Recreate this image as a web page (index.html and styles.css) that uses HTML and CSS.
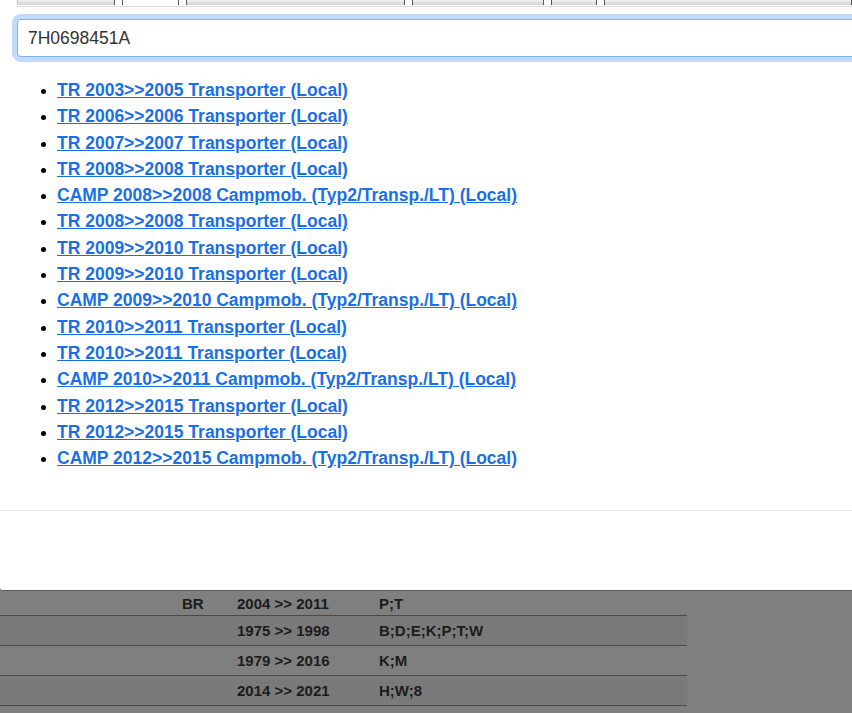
FILE: index.html
```html
<!DOCTYPE html>
<html lang="de">
  <head>
    <meta charset="UTF-8" />
    <meta name="viewport" content="width=device-width, initial-scale=1.0" />
    <title>Teilesuche</title>
    <link rel="stylesheet" href="styles.css">
  </head>
  <body>
    <div class="modal">
      <ul class="tabs">
        <li class="tab tab-1"></li>
        <li class="tab tab-2 is-active"></li>
        <li class="tab tab-3"></li>
        <li class="tab tab-4"></li>
        <li class="tab tab-5"></li>
        <li class="tab tab-6"></li>
      </ul>

      <div class="search">
        <input class="search-input" type="text" value="7H0698451A" />
      </div>

      <ul class="result-list">
        <li><a href="#">TR 2003&gt;&gt;2005 Transporter (Local)</a></li>
        <li><a href="#">TR 2006&gt;&gt;2006 Transporter (Local)</a></li>
        <li><a href="#">TR 2007&gt;&gt;2007 Transporter (Local)</a></li>
        <li><a href="#">TR 2008&gt;&gt;2008 Transporter (Local)</a></li>
        <li><a href="#">CAMP 2008&gt;&gt;2008 Campmob. (Typ2/Transp./LT) (Local)</a></li>
        <li><a href="#">TR 2008&gt;&gt;2008 Transporter (Local)</a></li>
        <li><a href="#">TR 2009&gt;&gt;2010 Transporter (Local)</a></li>
        <li><a href="#">TR 2009&gt;&gt;2010 Transporter (Local)</a></li>
        <li><a href="#">CAMP 2009&gt;&gt;2010 Campmob. (Typ2/Transp./LT) (Local)</a></li>
        <li><a href="#">TR 2010&gt;&gt;2011 Transporter (Local)</a></li>
        <li><a href="#">TR 2010&gt;&gt;2011 Transporter (Local)</a></li>
        <li><a href="#">CAMP 2010&gt;&gt;2011 Campmob. (Typ2/Transp./LT) (Local)</a></li>
        <li><a href="#">TR 2012&gt;&gt;2015 Transporter (Local)</a></li>
        <li><a href="#">TR 2012&gt;&gt;2015 Transporter (Local)</a></li>
        <li><a href="#">CAMP 2012&gt;&gt;2015 Campmob. (Typ2/Transp./LT) (Local)</a></li>
      </ul>

      <hr class="divider" />
    </div>

    <!-- Seite hinter dem Dialog -->
    <div class="model-table">
      <div class="model-row">
        <span></span><span>BR</span><span>2004 &gt;&gt; 2011</span><span>P;T</span>
      </div>
      <div class="model-row">
        <span></span><span></span><span>1975 &gt;&gt; 1998</span><span>B;D;E;K;P;T;W</span>
      </div>
      <div class="model-row">
        <span></span><span></span><span>1979 &gt;&gt; 2016</span><span>K;M</span>
      </div>
      <div class="model-row">
        <span></span><span></span><span>2014 &gt;&gt; 2021</span><span>H;W;8</span>
      </div>
      <div class="model-row">
        <span></span><span></span><span></span><span></span>
      </div>
    </div>
  </body>
</html>
```

FILE: styles.css
```css
* {
  padding: 0;
  margin: 0;
  box-sizing: border-box;
}

html,
body {
  height: 100%;
  overflow: hidden;
}

body {
  font-family: "Liberation Sans", Arial, sans-serif;
  font-size: 16px;
  color: #1a1a1a;
  background-color: #7f7f7f;
}

.modal {
  height: 591px;
  overflow: hidden;
  background: #fff;
  border-bottom: 1px solid #5c5c5c;
  border-bottom-left-radius: 3px;
}

.tabs {
  display: flex;
  gap: 7px;
  height: 7px;
  margin-left: 17px;
  list-style: none;
  border-bottom: 1px solid #dcdce2;
}

.tab {
  height: 5px;
  background: linear-gradient(#f0f0f0, #d2d2d2);
  border-right: 1px solid #555;
  border-left: 1px solid #555;
}

.tab:first-child {
  border-left-color: #c8c8c8;
}

.tab.is-active {
  background: #fff;
}

.tab-1 { width: 98px; }
.tab-2 { width: 57px; }
.tab-3 { width: 219px; }
.tab-4 { width: 132px; }
.tab-5 { width: 46px; }
.tab-6 { flex: 1; }

.search {
  padding: 12px 0 0 17px;
}

.search-input {
  display: block;
  width: calc(100% + 20px);
  height: 38px;
  padding: 0 10px;
  font-family: "Liberation Sans", Arial, sans-serif;
  font-size: 17.5px;
  color: #333;
  border: 1px solid #80b1ef;
  border-radius: 4px;
  outline: none;
  box-shadow: 0 0 0 5px #c1dbfa;
}

.result-list {
  margin: 20px 0 39px 57px;
  padding: 0;
  line-height: 26.3px;
}

.result-list li {
  font-size: 17.5px;
  font-weight: bold;
}

.result-list li::marker {
  font-size: 15px;
  color: #000;
}

.result-list a {
  color: #1b6fe6;
  text-decoration: underline;
}

.divider {
  height: 0;
  border: none;
  border-top: 1px solid #e4e4e4;
}

.model-table {
  width: 687px;
  font-size: 15px;
  font-weight: bold;
  color: #1c1c1c;
}

.model-row {
  display: grid;
  grid-template-columns: 182px 55px 142px 1fr;
  align-items: center;
  height: 30px;
  border-bottom: 1px solid #4a4a4a;
}

.model-row:first-child {
  height: 25px;
}

.model-row:nth-child(even) {
  background: #7a7a7a;
}
```
